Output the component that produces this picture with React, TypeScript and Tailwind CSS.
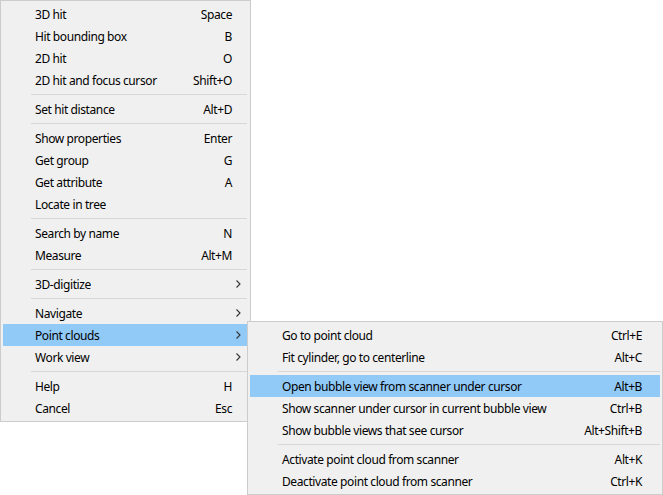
import React from "react";

type Item =
  | { type: "item"; label: string; shortcut?: string; sub?: boolean; active?: boolean }
  | { type: "sep" };

const mainItems: Item[] = [
  { type: "item", label: "3D hit", shortcut: "Space" },
  { type: "item", label: "Hit bounding box", shortcut: "B" },
  { type: "item", label: "2D hit", shortcut: "O" },
  { type: "item", label: "2D hit and focus cursor", shortcut: "Shift+O" },
  { type: "sep" },
  { type: "item", label: "Set hit distance", shortcut: "Alt+D" },
  { type: "sep" },
  { type: "item", label: "Show properties", shortcut: "Enter" },
  { type: "item", label: "Get group", shortcut: "G" },
  { type: "item", label: "Get attribute", shortcut: "A" },
  { type: "item", label: "Locate in tree" },
  { type: "sep" },
  { type: "item", label: "Search by name", shortcut: "N" },
  { type: "item", label: "Measure", shortcut: "Alt+M" },
  { type: "sep" },
  { type: "item", label: "3D-digitize", sub: true },
  { type: "sep" },
  { type: "item", label: "Navigate", sub: true },
  { type: "item", label: "Point clouds", sub: true, active: true },
  { type: "item", label: "Work view", sub: true },
  { type: "sep" },
  { type: "item", label: "Help", shortcut: "H" },
  { type: "item", label: "Cancel", shortcut: "Esc" },
];

const subItems: Item[] = [
  { type: "item", label: "Go to point cloud", shortcut: "Ctrl+E" },
  { type: "item", label: "Fit cylinder, go to centerline", shortcut: "Alt+C" },
  { type: "sep" },
  { type: "item", label: "Open bubble view from scanner under cursor", shortcut: "Alt+B", active: true },
  { type: "item", label: "Show scanner under cursor in current bubble view", shortcut: "Ctrl+B" },
  { type: "item", label: "Show bubble views that see cursor", shortcut: "Alt+Shift+B" },
  { type: "sep" },
  { type: "item", label: "Activate point cloud from scanner", shortcut: "Alt+K" },
  { type: "item", label: "Deactivate point cloud from scanner", shortcut: "Ctrl+K" },
];

function Chevron() {
  return (
    <svg width="5" height="8" viewBox="0 0 5 8" className="block">
      <path d="M0.5 0.5 L4 4 L0.5 7.5" fill="none" stroke="#333" strokeWidth="1.1" />
    </svg>
  );
}

function MenuRows({ items, rightPad }: { items: Item[]; rightPad: string }) {
  return (
    <>
      {items.map((it, i) =>
        it.type === "sep" ? (
          <div key={i} className="h-[7px] flex items-center pl-[28px]">
            <div className="h-px w-full bg-[#d7d7d7]" />
          </div>
        ) : (
          <div
            key={i}
            className={`h-[22px] flex items-center pt-[2px] pl-[32px] ${rightPad} ${it.active ? "bg-[#91c9f7]" : ""}`}
          >
            <span className="flex-1 whitespace-nowrap">{it.label}</span>
            {it.shortcut && <span className="whitespace-nowrap">{it.shortcut}</span>}
            {it.sub && (
              <span className="mr-[-9px] -mt-[2px]">
                <Chevron />
              </span>
            )}
          </div>
        )
      )}
    </>
  );
}

export default function App() {
  return (
    <div
      className="relative w-[663px] h-[495px] bg-white text-[12px] tracking-[-0.4px] text-black overflow-hidden"
      style={{ fontFamily: '"Noto Sans", "Open Sans", sans-serif' }}
    >
      <div className="w-[251px] border border-[#cccccc] bg-[#f0f0f0] pt-[2px] pb-[2px] pl-[2px] pr-[3px]">
        <MenuRows items={mainItems} rightPad="pr-[15px]" />
      </div>
      <div className="absolute left-[247px] top-[321px] w-[416px] border border-[#cccccc] bg-[#f0f0f0] p-[2px]">
        <MenuRows items={subItems} rightPad="pr-[18px]" />
      </div>
    </div>
  );
}
